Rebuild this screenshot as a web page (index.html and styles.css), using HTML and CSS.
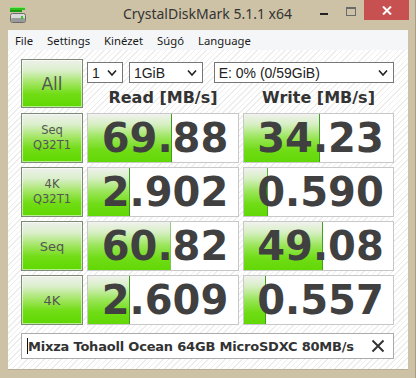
FILE: index.html
```html
<!DOCTYPE html>
<html lang="hu">
<head>
    <meta charset="UTF-8">
    <title>CrystalDiskMark 5.1.1 x64</title>
    <link rel="stylesheet" href="styles.css">
</head>
<body>
    <div class="window">
        <div class="titlebar">
            <div class="tb-left">
                <svg class="app-icon" width="16" height="17" viewBox="0 0 16 17">
                    <rect x="0" y="1" width="15" height="3" fill="#2fc21e"/>
                    <rect x="0" y="1" width="15" height="1" fill="#7fe86a"/>
                    <rect x="0" y="4" width="12" height="2" fill="#1c9a14"/>
                    <rect x="0.5" y="7.5" width="15" height="9" rx="2" fill="#d9d9d9" stroke="#6a6a6a"/>
                    <rect x="1" y="12" width="14" height="4" rx="1.5" fill="#9a9a9a"/>
                    <rect x="11" y="10" width="2" height="3" fill="#33cc22"/>
                </svg>
            </div>
            <div class="title">CrystalDiskMark 5.1.1 x64</div>
            <div class="tb-right">
                <span class="btn-min"></span>
                <span class="btn-max"></span>
                <span class="btn-close">
                    <svg width="10" height="9" viewBox="0 0 10 9">
                        <path d="M1 0.5 L9 8.5 M9 0.5 L1 8.5" stroke="#fff" stroke-width="2"/>
                    </svg>
                </span>
            </div>
        </div>

        <div class="client">
            <div class="menubar">
                <span>File</span>
                <span>Settings</span>
                <span>Kinézet</span>
                <span>Súgó</span>
                <span>Language</span>
            </div>

            <div class="bench">
                <div class="test-btn big">All</div>
                <div class="head">
                    <div class="controls">
                        <div class="combo c-count">1<svg class="chev" width="10" height="6" viewBox="0 0 10 6"><path d="M1 0.5 L5 5 L9 0.5" fill="none" stroke="#222" stroke-width="1.6"/></svg></div>
                        <div class="combo c-size">1GiB<svg class="chev" width="10" height="6" viewBox="0 0 10 6"><path d="M1 0.5 L5 5 L9 0.5" fill="none" stroke="#222" stroke-width="1.6"/></svg></div>
                        <div class="combo c-drive">E: 0% (0/59GiB)<svg class="chev" width="10" height="6" viewBox="0 0 10 6"><path d="M1 0.5 L5 5 L9 0.5" fill="none" stroke="#222" stroke-width="1.6"/></svg></div>
                    </div>
                    <div class="heads">
                        <div>Read [MB/s]</div>
                        <div>Write [MB/s]</div>
                    </div>
                </div>

                <div class="test-btn small">Seq<br>Q32T1</div>
                <div class="result" style="--w:56%">69.88</div>
                <div class="result" style="--w:51%">34.23</div>

                <div class="test-btn small">4K<br>Q32T1</div>
                <div class="result" style="--w:28%">2.902</div>
                <div class="result" style="--w:16%">0.590</div>

                <div class="test-btn mid">Seq</div>
                <div class="result" style="--w:55%">60.82</div>
                <div class="result" style="--w:53%">49.08</div>

                <div class="test-btn mid">4K</div>
                <div class="result" style="--w:28%">2.609</div>
                <div class="result" style="--w:15%">0.557</div>

                <div class="label-box">
                    <span class="caret"></span>
                    <span class="label-text">Mixza Tohaoll Ocean 64GB MicroSDXC 80MB/s</span>
                    <svg class="clear" width="14" height="14" viewBox="0 0 14 14">
                        <path d="M1.5 1.5 L12.5 12.5 M12.5 1.5 L1.5 12.5" stroke="#333" stroke-width="2"/>
                    </svg>
                </div>
            </div>
        </div>
    </div>
</body>
</html>
```

FILE: styles.css
```css
body {
    margin: 0;
    width: 416px;
    height: 378px;
    overflow: hidden;
    background: #cec2a6;
    font-family: "DejaVu Sans", sans-serif;
}
.window {
    width: 416px;
    height: 378px;
    box-sizing: border-box;
    border-right: 1px solid #a99e84;
    display: flex;
    flex-direction: column;
}
.titlebar {
    height: 30px;
    display: grid;
    grid-template-columns: 1fr auto 1fr;
}
.tb-left {
    padding: 6px 0 0 10px;
}
.app-icon {
    display: block;
}
.title {
    font-family: "Noto Sans", sans-serif;
    font-size: 14px;
    line-height: 30px;
    color: #333;
    margin-top: -1px;
}
.tb-right {
    display: flex;
    justify-content: flex-end;
    align-items: flex-start;
    padding-right: 6px;
}
.btn-min {
    width: 8px;
    height: 2px;
    margin-top: 13px;
    margin-right: 18px;
    background: #222;
}
.btn-max {
    width: 8px;
    height: 6px;
    margin-top: 7px;
    margin-right: 8px;
    border: 1px solid #6a6a6a;
    border-top-width: 2px;
}
.btn-close {
    width: 45px;
    height: 20px;
    background: #c75050;
    display: flex;
    align-items: center;
    justify-content: center;
}
.client {
    flex: 1;
    margin: 0 7px 8px 8px;
    display: flex;
    flex-direction: column;
    background: repeating-linear-gradient(135deg, #fff 0 2px, #ededed 2px 3px, #fff 3px 4px);
    border-bottom: 1px solid #b9ae95;
}
.menubar {
    height: 20px;
    display: flex;
    align-items: center;
    gap: 14px;
    padding-left: 7px;
    background: #f5f6f7;
    font-family: "Noto Sans", sans-serif;
    font-size: 11.3px;
    color: #1a1a1a;
}
.bench {
    padding: 9px 0 0 13px;
    display: grid;
    grid-template-columns: 62px 152px 151px;
    grid-template-rows: 50px 50px 50px 50px 50px 30px;
    column-gap: 4px;
    row-gap: 4px;
}
.test-btn {
    box-sizing: border-box;
    border: 1px solid #7d8b76;
    box-shadow: inset 0 0 0 1px rgba(255, 255, 255, 0.55);
    background: linear-gradient(#eef0ec 0%, #dbefcc 22%, #a4e666 48%, #72dd16 72%, #5ed800 100%);
    display: flex;
    align-items: center;
    justify-content: center;
    text-align: center;
    color: #555;
}
.test-btn.big {
    font-size: 17px;
    margin-bottom: 1px;
}
.test-btn.small {
    font-size: 11.5px;
    line-height: 15px;
}
.test-btn.mid {
    font-size: 13px;
}
.head {
    grid-column: 2 / 4;
    display: flex;
    flex-direction: column;
}
.controls {
    display: flex;
    margin-top: 3px;
    height: 21px;
}
.combo {
    box-sizing: border-box;
    height: 21px;
    border: 1px solid #777;
    background: #fff;
    display: flex;
    align-items: center;
    padding: 0 5px 0 4px;
    font-family: "Liberation Sans", sans-serif;
    font-size: 14px;
    color: #222;
}
.chev {
    margin-left: auto;
}
.c-count {
    width: 36px;
}
.c-size {
    width: 74px;
    margin-left: 6px;
}
.c-drive {
    width: 181px;
    margin-left: 11px;
}
.heads {
    margin-top: auto;
    display: grid;
    grid-template-columns: 152px 151px;
    column-gap: 4px;
    font-weight: bold;
    font-size: 16px;
    line-height: 20px;
    color: #333;
    text-align: center;
    margin-bottom: 1px;
}
.result {
    box-sizing: border-box;
    border: 1px solid #c8c8c8;
    background-color: #fff;
    background-image:
        linear-gradient(to right, transparent calc(100% - 1px), #3e9e1c calc(100% - 1px)),
        linear-gradient(#f1f2ef 0%, #d6efc2 22%, #98e556 50%, #70dc16 75%, #62d806 100%);
    background-size: var(--w) 100%;
    background-repeat: no-repeat;
    display: flex;
    align-items: center;
    justify-content: center;
    padding-left: 4px;
    font-weight: bold;
    font-size: 40px;
    color: #404040;
}
.label-box {
    grid-column: 1 / 4;
    margin-top: 4px;
    box-sizing: border-box;
    border: 1px solid #ababab;
    background: #fff;
    display: flex;
    align-items: center;
    padding-left: 5px;
}
.caret {
    width: 1px;
    height: 16px;
    background: #111;
}
.label-text {
    font-weight: bold;
    font-size: 13px;
    color: #333;
    letter-spacing: -0.2px;
}
.clear {
    margin-left: auto;
    margin-right: 8px;
}
```
